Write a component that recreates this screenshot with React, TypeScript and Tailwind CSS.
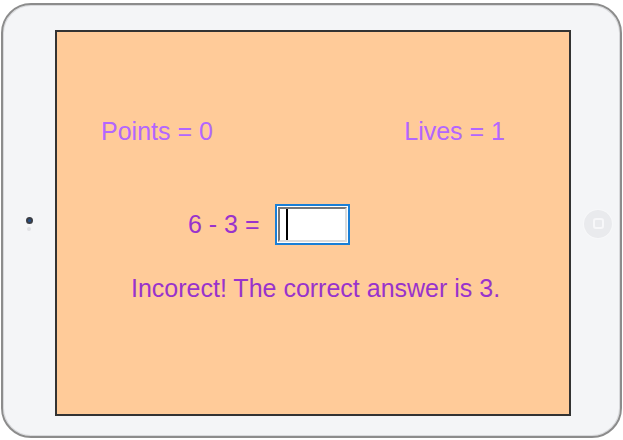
export default function App() {
  return (
    <div className="h-[440px] w-[623px] overflow-hidden bg-white px-px pt-[3px]" style={{ fontFamily: '"Liberation Sans", Arial, sans-serif' }}>
      <div className="flex h-[435px] rounded-[30px] border-2 border-[#8c8c8c] bg-[#f4f5f7] pb-[19px] pt-[25px] shadow-[inset_0_0_0_1px_#d8d9dc]">
        <div className="flex w-[52px] flex-col items-center justify-center gap-[3px]">
          <div className="size-[7px] rounded-full border-2 border-[#3a3d44] bg-[#24508a]" />
          <div className="size-[4px] rounded-full bg-[#e0e1e4]" />
        </div>
        <div className="flex h-[386px] w-[516px] flex-col border-2 border-[#333] bg-[#ffcb99]">
          <div className="flex justify-between pl-[44px] pr-[64px] pt-[85px] text-[25px] leading-[28px] text-[#b366ff]">
            <span>Points = 0</span>
            <span>Lives = 1</span>
          </div>
          <div className="mt-[59px] flex items-center pl-[131px] text-[25px] text-[#9933cc]">
            <span>6 - 3 =</span>
            <div className="ml-[15px] flex h-[41px] w-[75px] items-stretch border-2 border-[#1a7fd6] bg-white p-[1px]">
              <div className="flex flex-1 items-center border-2 border-b-[#dcdcdc] border-l-[#777] border-r-[#dcdcdc] border-t-[#777] bg-white pl-[6px]">
                <div className="h-[31px] w-[2px] bg-black" />
              </div>
            </div>
          </div>
          <div className="mt-[29px] pl-[74px] text-[25px] leading-[28px] text-[#9933cc]">Incorect! The correct answer is 3.</div>
        </div>
        <div className="flex flex-1 items-center justify-center pl-[5px]">
          <div className="flex size-[28px] items-center justify-center rounded-full bg-[#e9eaed] shadow-[0_0_2px_#fff]">
            <div className="size-[11px] rounded-[3px] border-2 border-[#f7f7f9]" />
          </div>
        </div>
      </div>
    </div>
  );
}
